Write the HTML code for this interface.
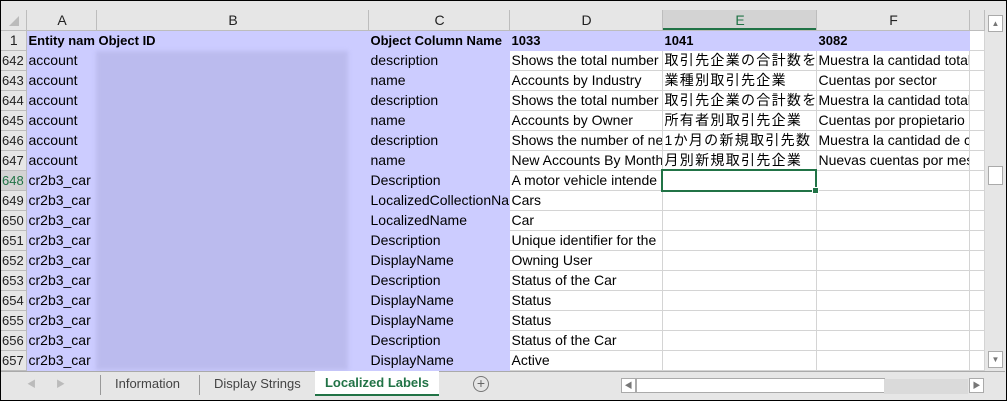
<!DOCTYPE html><html><head><meta charset="utf-8"><style>
body{margin:0;width:1007px;height:401px;overflow:hidden;background:#e6e6e6;font-family:"Liberation Sans","Noto Sans CJK JP",sans-serif;font-size:14px;position:relative}
.frame{position:absolute;left:0;top:0;width:1005px;height:399px;border:1px solid #000}
table{position:absolute;left:1px;top:10px;border-collapse:collapse;table-layout:fixed;width:983px}
td{height:19px;padding:0 0 0 2px;white-space:nowrap;overflow:hidden;border-right:1px solid #d4d4d4;border-bottom:1px solid #d4d4d4;background:#fff;color:#000;line-height:19px}
td.h{background:#e6e6e6;text-align:center;border-color:#bdbdbd;color:#222;font-size:14px;height:18px;line-height:18px}
td.r{background:#e6e6e6;border-color:#bdbdbd;padding:0 0 0 1px;color:#222;font-size:13px}
td.l{background:#ccccff;border-color:#ccccff}
tr.t td.l{font-weight:bold;font-size:13px}
td.hs{background:#d3d3d3;color:#217346;box-shadow:inset 0 -2px 0 #217346}
td.w{background:#fff}
td.j{font-size:14px;letter-spacing:1.3px}
.blur{position:absolute;left:96px;top:51px;width:252px;height:319px;background:#bbbbee;filter:blur(2px)}
.sel{position:absolute;left:661px;top:169px;width:152px;height:19px;border:2px solid #217346}
.sel:after{content:"";position:absolute;right:-4px;bottom:-4px;width:5px;height:5px;background:#217346;border:1px solid #fff}
.vs{position:absolute;left:985px;top:10px;width:20px;height:360px;background:#e6e6e6}
.btn{position:absolute;background:#fff;border:1px solid #aaa}
.tabs{position:absolute;left:1px;top:371px;width:1004px;height:27px;background:#e6e6e6;border-top:1px solid #aaa}
.tab{position:absolute;top:0;height:26px;line-height:24px;color:#444;font-size:13px}
</style></head><body>
<div class="frame"></div>
<table>
<colgroup><col style="width:25px"><col style="width:70px"><col style="width:272px"><col style="width:141px"><col style="width:153px"><col style="width:154px"><col style="width:153px"><col style="width:15px"></colgroup>
<tr><td class="h" style="background:#e6e6e6"><span style="display:inline-block;width:0;height:0;border-left:10px solid transparent;border-bottom:10px solid #bbb;margin-top:6px"></span></td><td class="h">A</td><td class="h">B</td><td class="h">C</td><td class="h">D</td><td class="h hs">E</td><td class="h">F</td><td class="h"></td></tr>
<tr class="t"><td class="r" style="text-align:center;font-size:14px">1</td><td class="l">Entity nam</td><td class="l">Object ID</td><td class="l">Object Column Name</td><td class="l">1033</td><td class="l">1041</td><td class="l">3082</td><td class="w"></td></tr>
<tr><td class="r">642</td><td class="l">account</td><td class="l"></td><td class="l">description</td><td>Shows the total number</td><td class="j">取引先企業の合計数を</td><td>Muestra la cantidad total de</td><td></td></tr>
<tr><td class="r">643</td><td class="l">account</td><td class="l"></td><td class="l">name</td><td>Accounts by Industry</td><td class="j">業種別取引先企業</td><td>Cuentas por sector</td><td></td></tr>
<tr><td class="r">644</td><td class="l">account</td><td class="l"></td><td class="l">description</td><td>Shows the total number</td><td class="j">取引先企業の合計数を</td><td>Muestra la cantidad total de</td><td></td></tr>
<tr><td class="r">645</td><td class="l">account</td><td class="l"></td><td class="l">name</td><td>Accounts by Owner</td><td class="j">所有者別取引先企業</td><td>Cuentas por propietario</td><td></td></tr>
<tr><td class="r">646</td><td class="l">account</td><td class="l"></td><td class="l">description</td><td>Shows the number of ne</td><td class="j">1か月の新規取引先数</td><td>Muestra la cantidad de cue</td><td></td></tr>
<tr><td class="r">647</td><td class="l">account</td><td class="l"></td><td class="l">name</td><td>New Accounts By Month</td><td class="j">月別新規取引先企業</td><td>Nuevas cuentas por mes</td><td></td></tr>
<tr><td class="r" style="color:#217346;background:#d3d3d3">648</td><td class="l">cr2b3_car</td><td class="l"></td><td class="l">Description</td><td>A motor vehicle intende</td><td></td><td></td><td></td></tr>
<tr><td class="r">649</td><td class="l">cr2b3_car</td><td class="l"></td><td class="l">LocalizedCollectionNa</td><td>Cars</td><td></td><td></td><td></td></tr>
<tr><td class="r">650</td><td class="l">cr2b3_car</td><td class="l"></td><td class="l">LocalizedName</td><td>Car</td><td></td><td></td><td></td></tr>
<tr><td class="r">651</td><td class="l">cr2b3_car</td><td class="l"></td><td class="l">Description</td><td>Unique identifier for the</td><td></td><td></td><td></td></tr>
<tr><td class="r">652</td><td class="l">cr2b3_car</td><td class="l"></td><td class="l">DisplayName</td><td>Owning User</td><td></td><td></td><td></td></tr>
<tr><td class="r">653</td><td class="l">cr2b3_car</td><td class="l"></td><td class="l">Description</td><td>Status of the Car</td><td></td><td></td><td></td></tr>
<tr><td class="r">654</td><td class="l">cr2b3_car</td><td class="l"></td><td class="l">DisplayName</td><td>Status</td><td></td><td></td><td></td></tr>
<tr><td class="r">655</td><td class="l">cr2b3_car</td><td class="l"></td><td class="l">DisplayName</td><td>Status</td><td></td><td></td><td></td></tr>
<tr><td class="r">656</td><td class="l">cr2b3_car</td><td class="l"></td><td class="l">Description</td><td>Status of the Car</td><td></td><td></td><td></td></tr>
<tr><td class="r">657</td><td class="l">cr2b3_car</td><td class="l"></td><td class="l">DisplayName</td><td>Active</td><td></td><td></td><td></td></tr>
</table>
<div class="blur"></div>
<div class="sel"></div>
<div class="vs">
<div class="btn" style="left:3px;top:5px;width:13px;height:15px;text-align:center;font-size:8px;line-height:15px;color:#777">▲</div>
<div class="btn" style="left:3px;top:156px;width:13px;height:17px"></div>
<div class="btn" style="left:3px;top:341px;width:13px;height:15px;text-align:center;font-size:8px;line-height:15px;color:#777">▼</div>
</div>
<div class="tabs">
<div class="tab" style="left:26px;color:#bbb;font-size:9px">◀</div>
<div class="tab" style="left:55px;color:#bbb;font-size:9px">▶</div>
<div style="position:absolute;left:99px;top:3px;width:1px;height:20px;background:#999"></div>
<div class="tab" style="left:114px">Information</div>
<div style="position:absolute;left:198px;top:3px;width:1px;height:20px;background:#999"></div>
<div class="tab" style="left:213px">Display Strings</div>
<div class="tab" style="left:314px;width:124px;background:#fff;border-bottom:2px solid #217346;height:23px;text-align:center;color:#217346;font-weight:bold;top:-1px">Localized Labels</div>
<div class="tab" style="left:472px;top:4px;width:14px;height:14px;border:1px solid #777;border-radius:50%;line-height:13px;text-align:center;font-size:14px;color:#666">+</div>
<div class="btn" style="left:620px;top:6px;width:13px;height:13px;font-size:8px;line-height:13px;text-align:center;color:#777">◀</div>
<div class="btn" style="left:635px;top:6px;width:247px;height:13px"></div>
<div style="position:absolute;left:883px;top:7px;width:84px;height:15px;background:#dadada"></div>
<div class="btn" style="left:968px;top:6px;width:13px;height:13px;font-size:8px;line-height:13px;text-align:center;color:#777">▶</div>
</div>
</body></html>
